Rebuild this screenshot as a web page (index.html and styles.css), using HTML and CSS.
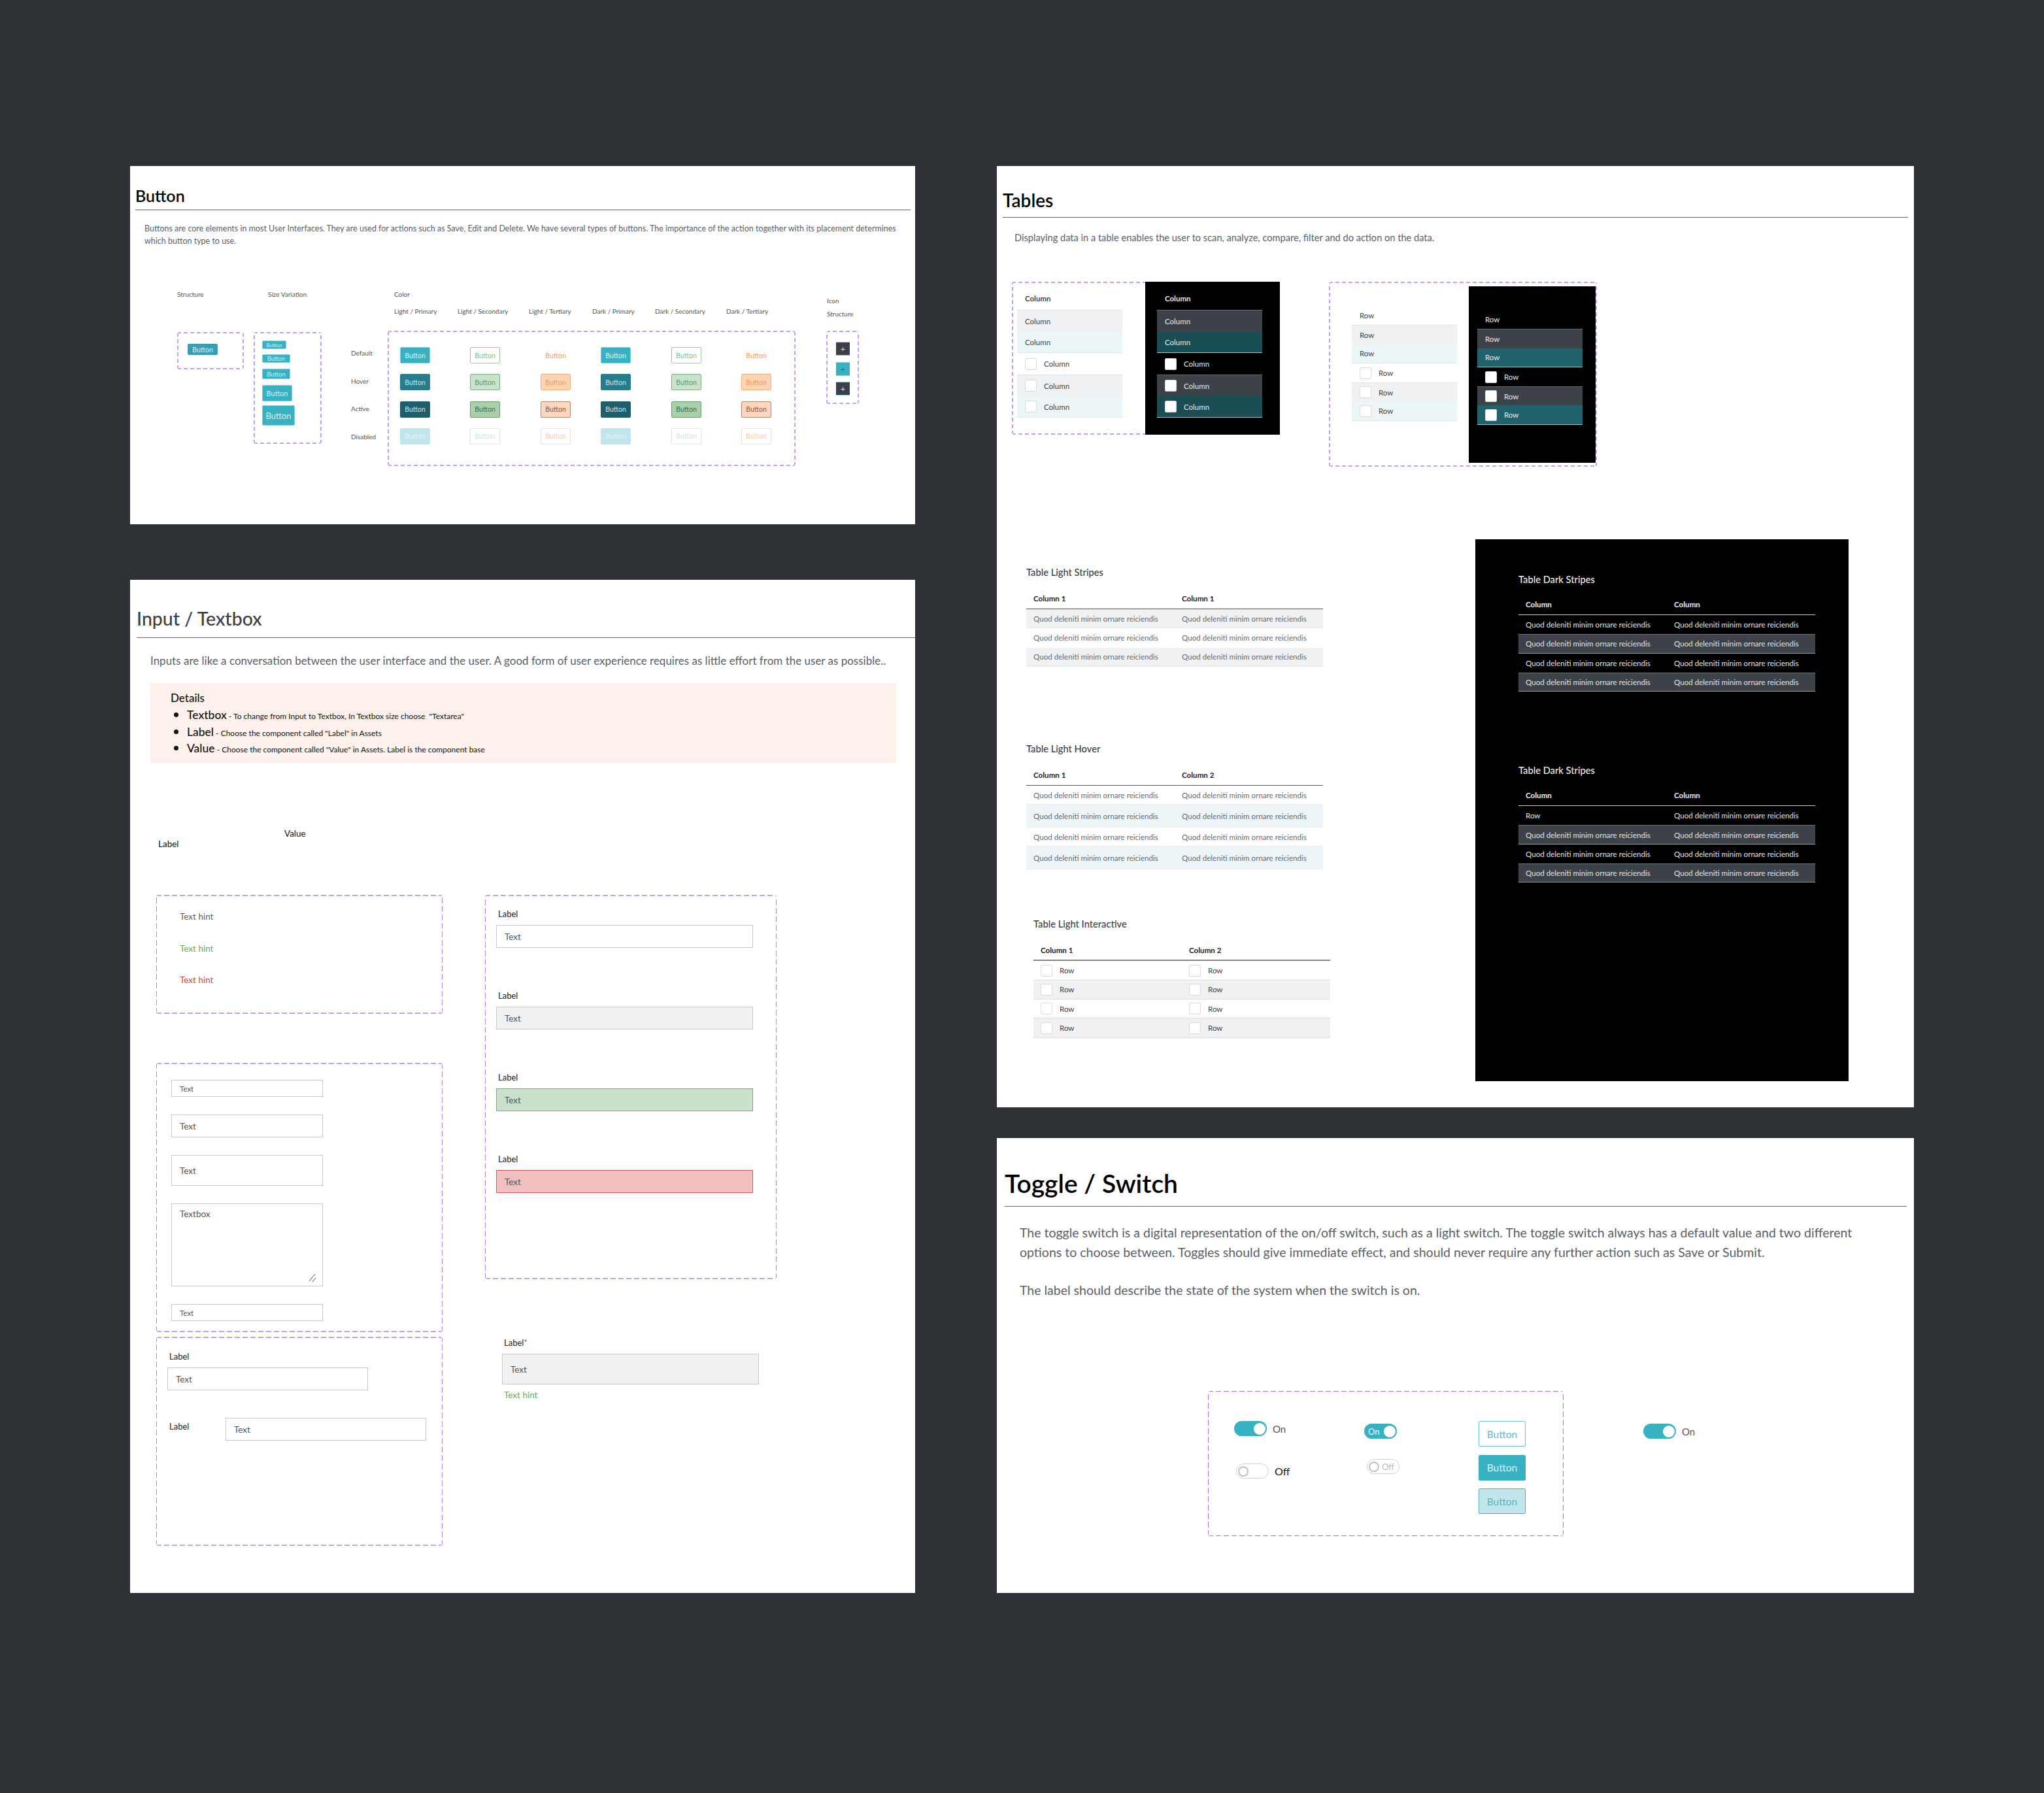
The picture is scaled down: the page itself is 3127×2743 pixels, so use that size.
FILE: index.html
```html
<!DOCTYPE html>
<html lang="en">
<head>
    <meta charset="UTF-8">
    <title>Design System Components</title>
    <link rel="stylesheet" href="styles.css">
</head>
<body>
<div class="canvas">

    <!-- left column -->
    <div class="board-col board-col-left">

        <section class="board board-button">
            <header class="board-head head-button"><h1>Button</h1></header>
            <p class="button-intro">Buttons are core elements in most User Interfaces. They are used for actions such as Save, Edit and Delete. We have several types of buttons. The importance of the action together with its placement determines which button type to use.</p>

            <div class="button-demo">
                <div class="demo-col">
                    <div class="demo-head small">Structure</div>
                    <div class="dashed struct-box"><span class="btn btn-struct">Button</span></div>
                </div>
                <div class="demo-col">
                    <div class="demo-head small indent">Size Variation</div>
                    <div class="dashed size-box">
                        <span class="btn btn-primary btn-xs">Button</span>
                        <span class="btn btn-primary btn-sm">Button</span>
                        <span class="btn btn-primary btn-md">Button</span>
                        <span class="btn btn-primary btn-lg">Button</span>
                        <span class="btn btn-primary btn-xl">Button</span>
                    </div>
                </div>
                <div class="state-col small">
                    <span>Default</span>
                    <span>Hover</span>
                    <span>Active</span>
                    <span>Disabled</span>
                </div>
                <div class="demo-col">
                    <div class="color-head small">
                        <div>Color</div>
                        <div class="color-labels">
                            <span>Light / Primary</span>
                            <span>Light / Secondary</span>
                            <span>Light / Tertiary</span>
                            <span>Dark / Primary</span>
                            <span>Dark / Secondary</span>
                            <span>Dark / Tertiary</span>
                        </div>
                    </div>
                    <div class="dashed color-box">
                        <span class="btn btn-primary">Button</span>
                        <span class="btn btn-second">Button</span>
                        <span class="btn btn-third">Button</span>
                        <span class="btn btn-primary">Button</span>
                        <span class="btn btn-second">Button</span>
                        <span class="btn btn-third">Button</span>

                        <span class="btn btn-primary hover">Button</span>
                        <span class="btn btn-second hover">Button</span>
                        <span class="btn btn-third hover">Button</span>
                        <span class="btn btn-primary hover">Button</span>
                        <span class="btn btn-second hover">Button</span>
                        <span class="btn btn-third hover">Button</span>

                        <span class="btn btn-primary active">Button</span>
                        <span class="btn btn-second active">Button</span>
                        <span class="btn btn-third active">Button</span>
                        <span class="btn btn-primary active">Button</span>
                        <span class="btn btn-second active">Button</span>
                        <span class="btn btn-third active">Button</span>

                        <span class="btn btn-primary disabled">Button</span>
                        <span class="btn btn-second disabled">Button</span>
                        <span class="btn btn-third disabled">Button</span>
                        <span class="btn btn-primary disabled">Button</span>
                        <span class="btn btn-second disabled">Button</span>
                        <span class="btn btn-third disabled">Button</span>
                    </div>
                </div>
                <div class="demo-col icon-col">
                    <div class="icon-head small"><div>Icon</div><div>Structure</div></div>
                    <div class="dashed icon-box">
                        <span class="icon-btn">+</span>
                        <span class="icon-btn icon-btn-teal">+</span>
                        <span class="icon-btn">+</span>
                    </div>
                </div>
            </div>
        </section>

        <section class="board board-input">
            <header class="board-head head-input"><h1>Input / Textbox</h1></header>
            <p class="input-intro">Inputs are like a conversation between the user interface and the user. A good form of user experience requires as little effort from the user as possible..</p>

            <div class="details">
                <h3>Details</h3>
                <ul>
                    <li><strong>Textbox</strong> - To change from Input to Textbox, In Textbox size choose &nbsp;"Textarea"</li>
                    <li><strong>Label</strong> - Choose the component called "Label" in Assets</li>
                    <li><strong>Value</strong> - Choose the component called "Value" in Assets. Label is the component base</li>
                </ul>
            </div>

            <div class="label-value">
                <span class="lv-label">Label</span>
                <span>Value</span>
            </div>

            <div class="input-cols">
                <div class="input-col-a">
                    <div class="dashed-thin hint-box">
                        <span class="hint">Text hint</span>
                        <span class="hint hint-ok">Text hint</span>
                        <span class="hint hint-bad">Text hint</span>
                    </div>
                    <div class="dashed-thin size-fields">
                        <div class="field field-s">Text</div>
                        <div class="field field-m">Text</div>
                        <div class="field field-l">Text</div>
                        <div class="field field-area">Textbox
                            <svg class="grip" width="12" height="14" viewBox="0 0 12 14"><path d="M1 12 L10 1 M6 13 L11 7" stroke="#555" stroke-width="1" fill="none"/></svg>
                        </div>
                        <div class="field field-s">Text</div>
                    </div>
                    <div class="dashed-thin layout-box">
                        <div class="form-label">Label</div>
                        <div class="field field-m field-wide">Text</div>
                        <div class="inline-form">
                            <div class="form-label inline-label">Label</div>
                            <div class="field field-m field-wide">Text</div>
                        </div>
                    </div>
                </div>

                <div class="input-col-b">
                    <div class="dashed-thin state-box">
                        <div class="form-label">Label</div>
                        <div class="field field-m field-full">Text</div>
                        <div class="form-label">Label</div>
                        <div class="field field-m field-full field-off">Text</div>
                        <div class="form-label">Label</div>
                        <div class="field field-m field-full field-ok">Text</div>
                        <div class="form-label">Label</div>
                        <div class="field field-m field-full field-bad">Text</div>
                    </div>
                    <div class="required">
                        <div class="form-label">Label<span class="star">*</span></div>
                        <div class="field field-l field-full field-off">Text</div>
                        <span class="hint hint-ok">Text hint</span>
                    </div>
                </div>
            </div>
        </section>
    </div>

    <!-- right column -->
    <div class="board-col board-col-right">

        <section class="board board-tables">
            <header class="board-head head-tables"><h1>Tables</h1></header>
            <p class="tables-intro">Displaying data in a table enables the user to scan, analyze, compare, filter and do action on the data.</p>

            <div class="cell-demos">
                <div class="dashed cell-box cell-box-col">
                    <div class="cells cells-light">
                        <div class="cell cell-head">Column</div>
                        <div class="cell cell-gray">Column</div>
                        <div class="cell cell-blue">Column</div>
                        <div class="cell"><i class="check"></i>Column</div>
                        <div class="cell cell-gray"><i class="check"></i>Column</div>
                        <div class="cell cell-blue"><i class="check"></i>Column</div>
                    </div>
                    <div class="cells cells-dark">
                        <div class="cell cell-head">Column</div>
                        <div class="cell cell-gray">Column</div>
                        <div class="cell cell-blue">Column</div>
                        <div class="cell"><i class="check"></i>Column</div>
                        <div class="cell cell-gray"><i class="check"></i>Column</div>
                        <div class="cell cell-blue"><i class="check"></i>Column</div>
                    </div>
                </div>
                <div class="dashed cell-box cell-box-row">
                    <div class="cells cells-light">
                        <div class="cell">Row</div>
                        <div class="cell cell-gray">Row</div>
                        <div class="cell cell-blue">Row</div>
                        <div class="cell"><i class="check"></i>Row</div>
                        <div class="cell cell-gray"><i class="check"></i>Row</div>
                        <div class="cell cell-blue"><i class="check"></i>Row</div>
                    </div>
                    <div class="cells cells-dark">
                        <div class="cell">Row</div>
                        <div class="cell cell-gray">Row</div>
                        <div class="cell cell-blue">Row</div>
                        <div class="cell"><i class="check"></i>Row</div>
                        <div class="cell cell-gray"><i class="check"></i>Row</div>
                        <div class="cell cell-blue"><i class="check"></i>Row</div>
                    </div>
                </div>
            </div>

            <div class="table-demos">
                <div class="light-tables">
                    <h4>Table Light Stripes</h4>
                    <div class="data-table stripes">
                        <div class="row row-head"><span>Column 1</span><span>Column 1</span></div>
                        <div class="row"><span>Quod deleniti minim ornare reiciendis</span><span>Quod deleniti minim ornare reiciendis</span></div>
                        <div class="row"><span>Quod deleniti minim ornare reiciendis</span><span>Quod deleniti minim ornare reiciendis</span></div>
                        <div class="row"><span>Quod deleniti minim ornare reiciendis</span><span>Quod deleniti minim ornare reiciendis</span></div>
                    </div>

                    <h4 class="hover-title">Table Light Hover</h4>
                    <div class="data-table hover-rows">
                        <div class="row row-head"><span>Column 1</span><span>Column 2</span></div>
                        <div class="row"><span>Quod deleniti minim ornare reiciendis</span><span>Quod deleniti minim ornare reiciendis</span></div>
                        <div class="row"><span>Quod deleniti minim ornare reiciendis</span><span>Quod deleniti minim ornare reiciendis</span></div>
                        <div class="row"><span>Quod deleniti minim ornare reiciendis</span><span>Quod deleniti minim ornare reiciendis</span></div>
                        <div class="row"><span>Quod deleniti minim ornare reiciendis</span><span>Quod deleniti minim ornare reiciendis</span></div>
                    </div>

                    <div class="interactive">
                        <h4>Table Light Interactive</h4>
                        <div class="data-table interactive-rows">
                            <div class="row row-head"><span>Column 1</span><span>Column 2</span></div>
                            <div class="row"><span><i class="check"></i>Row</span><span><i class="check"></i>Row</span></div>
                            <div class="row"><span><i class="check"></i>Row</span><span><i class="check"></i>Row</span></div>
                            <div class="row"><span><i class="check"></i>Row</span><span><i class="check"></i>Row</span></div>
                            <div class="row"><span><i class="check"></i>Row</span><span><i class="check"></i>Row</span></div>
                        </div>
                    </div>
                </div>

                <div class="dark-tables">
                    <h4>Table Dark Stripes</h4>
                    <div class="data-table dark-rows">
                        <div class="row row-head"><span>Column</span><span>Column</span></div>
                        <div class="row"><span>Quod deleniti minim ornare reiciendis</span><span>Quod deleniti minim ornare reiciendis</span></div>
                        <div class="row"><span>Quod deleniti minim ornare reiciendis</span><span>Quod deleniti minim ornare reiciendis</span></div>
                        <div class="row"><span>Quod deleniti minim ornare reiciendis</span><span>Quod deleniti minim ornare reiciendis</span></div>
                        <div class="row"><span>Quod deleniti minim ornare reiciendis</span><span>Quod deleniti minim ornare reiciendis</span></div>
                    </div>

                    <h4 class="dark-second">Table Dark Stripes</h4>
                    <div class="data-table dark-rows">
                        <div class="row row-head"><span>Column</span><span>Column</span></div>
                        <div class="row"><span>Row</span><span>Quod deleniti minim ornare reiciendis</span></div>
                        <div class="row"><span>Quod deleniti minim ornare reiciendis</span><span>Quod deleniti minim ornare reiciendis</span></div>
                        <div class="row"><span>Quod deleniti minim ornare reiciendis</span><span>Quod deleniti minim ornare reiciendis</span></div>
                        <div class="row"><span>Quod deleniti minim ornare reiciendis</span><span>Quod deleniti minim ornare reiciendis</span></div>
                    </div>
                </div>
            </div>
        </section>

        <section class="board board-toggle">
            <header class="board-head head-toggle"><h1>Toggle / Switch</h1></header>
            <div class="toggle-intro">
                <p>The toggle switch is a digital representation of the on/off switch, such as a light switch. The toggle switch always has a default value and two different options to choose between. Toggles should give immediate effect, and should never require any further action such as Save or Submit.</p>
                <p>The label should describe the state of the system when the switch is on.</p>
            </div>

            <div class="toggle-demo">
                <div class="dashed-thin toggle-box">
                    <div class="toggle-col-a">
                        <div class="toggle-line"><span class="toggle on"><i></i></span><span class="toggle-text">On</span></div>
                        <div class="toggle-line line-off"><span class="toggle off"><i></i></span><span class="toggle-text text-off">Off</span></div>
                    </div>
                    <div class="toggle-col-b">
                        <span class="toggle on">On<i></i></span>
                        <span class="toggle off faded"><i></i>Off</span>
                    </div>
                    <div class="toggle-col-c">
                        <span class="tbtn tbtn-outline">Button</span>
                        <span class="tbtn tbtn-solid">Button</span>
                        <span class="tbtn tbtn-soft">Button</span>
                    </div>
                </div>
                <div class="toggle-line toggle-lone"><span class="toggle on"><i></i></span><span class="toggle-text">On</span></div>
            </div>
        </section>
    </div>
</div>
</body>
</html>
```

FILE: styles.css
```css
* {
    box-sizing: border-box;
}

html, body {
    margin: 0;
    padding: 0;
}

body {
    background-color: #2e3136;
    font-family: "Lato", "Liberation Sans", sans-serif;
    color: #3b4048;
}

h1, h3, h4, p, ul {
    margin: 0;
    padding: 0;
}

.canvas {
    display: flex;
    gap: 125px;
    width: 3127px;
    height: 2743px;
    overflow: hidden;
    padding: 254px 0 0 199px;
}

.board-col {
    display: flex;
    flex-direction: column;
}

.board-col-left {
    width: 1201px;
    gap: 85px;
}

.board-col-right {
    width: 1403px;
    gap: 47px;
}

.board {
    background-color: #fff;
}

.board-head {
    border-bottom: 1px solid #666;
}

.board-head h1 {
    font-weight: 600;
    color: #000;
}

/* the dashes in the source are longer than a real dashed border gives */
.dashed, .dashed-thin {
    --dash: #c49bff;
    --dash-v: #c49bff;
    --h: 2px;
    --v: 2px;
    border: 2px solid transparent;
    border-radius: 4px;
    background:
        repeating-linear-gradient(90deg, var(--dash) 0 6px, transparent 6px 10px) top / 100% var(--h) no-repeat,
        repeating-linear-gradient(90deg, var(--dash) 0 6px, transparent 6px 10px) bottom / 100% var(--h) no-repeat,
        repeating-linear-gradient(0deg, var(--dash-v) 0 6px, transparent 6px 10px) left / var(--v) 100% no-repeat,
        repeating-linear-gradient(0deg, var(--dash-v) 0 6px, transparent 6px 10px) right / var(--v) 100% no-repeat;
    background-origin: border-box;
}

.dashed-thin {
    --dash: #c4a0ff;
    --dash-v: #b280ff;
    --v: 1px;
    border-width: 1px;
    background:
        repeating-linear-gradient(90deg, var(--dash) 0 8px, transparent 8px 12px) top / 100% var(--h) no-repeat,
        repeating-linear-gradient(90deg, var(--dash) 0 8px, transparent 8px 12px) bottom / 100% var(--h) no-repeat,
        repeating-linear-gradient(0deg, var(--dash-v) 0 9px, transparent 9px 13px) left / var(--v) 100% no-repeat,
        repeating-linear-gradient(0deg, var(--dash-v) 0 9px, transparent 9px 13px) right / var(--v) 100% no-repeat;
    background-origin: border-box;
}

.small {
    font-size: 10px;
    line-height: 20px;
    color: #555;
}

/* Button board */
.board-button {
    height: 548px;
}

.head-button {
    margin: 0 7px 0 8px;
    padding: 29px 0 5px;
    border-bottom: 2px solid #aaa;
}

.head-button h1 {
    font-size: 25px;
    line-height: 32px;
}

.button-intro {
    margin: 18px 0 0 22px;
    width: 1165px;
    font-size: 12.5px;
    line-height: 19px;
    color: #5a5f66;
}

.button-demo {
    display: flex;
    align-items: flex-start;
    margin: 62px 0 0 72px;
}

.demo-head {
    height: 68px;
}

.demo-head.indent {
    padding-left: 22px;
}

.struct-box {
    width: 102px;
    height: 57px;
    padding: 16px 14px;
}

.size-box {
    display: flex;
    flex-direction: column;
    align-items: flex-start;
    width: 104px;
    height: 171px;
    margin-left: 15px;
    padding: 11px 11px;
}

.demo-col:nth-child(2) .demo-head {
    margin-left: 15px;
}

.btn {
    display: flex;
    align-items: center;
    justify-content: center;
    width: 46px;
    height: 25px;
    border-radius: 2px;
    font-size: 10.5px;
}

.btn-struct {
    height: 17px;
    background-color: #379fb5;
    color: #d7f1f5;
}

.btn-primary {
    background-color: #38b1c3;
    border: 1px solid #7fd0dc;
    color: #d7f1f5;
}

.btn-primary.hover {
    background-color: #287d8c;
    border-color: #287d8c;
    color: #c5e6ec;
}

.btn-primary.active {
    background-color: #1f5f6b;
    border-color: #1f5f6b;
    color: #c5e6ec;
}

.btn-primary.disabled {
    background-color: #bfe6ec;
    border-color: #bfe6ec;
    color: #e4f5f7;
}

.btn-second {
    background-color: #fff;
    border: 1px solid #95cb9a;
    color: #7fc085;
}

.btn-second.hover {
    background-color: #c8e2cc;
    border-color: #7fae85;
    color: #5e9c65;
}

.btn-second.active {
    background-color: #a9d0ab;
    border-color: #6b9a70;
    color: #3e6d44;
}

.btn-second.disabled {
    background-color: #fff;
    border-color: #dcedde;
    color: #d2e8d4;
}

.btn-third {
    background-color: #fff;
    border: 1px solid #fff;
    color: #f0a060;
}

.btn-third.hover {
    background-color: #fdd3b5;
    border-color: #f2b07a;
    color: #ee9a55;
}

.btn-third.active {
    background-color: #fbd6c0;
    border-color: #b08768;
    color: #8a5a38;
}

.btn-third.disabled {
    background-color: #fff;
    border-color: #fbdcc6;
    color: #fbcfae;
}

.btn-xs { width: 37px; height: 13px; font-size: 8px; }
.btn-sm { width: 43px; height: 13px; font-size: 9px; margin-top: 8px; }
.btn-md { width: 43px; height: 16px; font-size: 9.5px; margin-top: 9px; }
.btn-lg { width: 46px; height: 25px; font-size: 11px; margin-top: 9px; }
.btn-xl { width: 50px; height: 31px; font-size: 13px; margin-top: 6px; }

.state-col {
    display: flex;
    flex-direction: column;
    gap: 22.7px;
    width: 56px;
    margin-left: 45px;
    padding-top: 90px;
}

.color-head {
    height: 66px;
    padding-left: 10px;
}

.color-labels {
    display: grid;
    grid-template-columns: 97px 109px 97px 96px 109px 100px;
    margin-top: 6px;
}

.color-box {
    display: grid;
    grid-template-columns: 107px 108px 92px 108px 107px 46px;
    grid-auto-rows: 25px;
    row-gap: 16.3px;
    width: 624px;
    height: 207px;
    padding: 23px 0 0 17px;
}

.icon-col {
    margin-left: 47px;
}

.icon-head {
    height: 66px;
    padding: 10px 0 0 1px;
    line-height: 20px;
}

.icon-box {
    display: flex;
    flex-direction: column;
    gap: 9.5px;
    width: 50px;
    height: 112px;
    padding: 15px 0 0 13px;
}

.icon-btn {
    display: flex;
    align-items: center;
    justify-content: center;
    width: 21px;
    height: 21px;
    background-color: #3b4048;
    border-top: 1px solid #8fc9d2;
    border-bottom: 1px solid #8fc9d2;
    color: #e4e6e8;
    font-size: 12px;
}

.icon-btn-teal {
    background-color: #38b1c3;
    color: #2b6b78;
}

/* Input board */
.board-input {
    height: 1550px;
}

.head-input {
    margin-left: 10px;
    padding: 41px 0 11px;
}

.head-input h1 {
    font-size: 28.5px;
    line-height: 36px;
    font-weight: 500;
    color: #3b4048;
}

.input-intro {
    margin: 23px 0 0 31px;
    font-size: 17px;
    line-height: 24px;
    color: #5a5f66;
}

.details {
    width: 1141px;
    height: 122px;
    margin: 22px 0 0 31px;
    padding: 11px 0 0 31px;
    background-color: #fdf1eb;
    color: #111;
    font-size: 12px;
}

.details h3 {
    font-size: 17px;
    line-height: 24px;
    font-weight: 500;
}

.details ul {
    padding-left: 25px;
}

.details li {
    height: 25.5px;
    line-height: 25.5px;
}

.details li::marker {
    font-size: 20px;
}

.details strong {
    font-size: 17.5px;
    font-weight: 500;
}

.label-value {
    display: flex;
    height: 36px;
    margin: 98px 0 0 43px;
    font-size: 13.5px;
    line-height: 20px;
    color: #111;
}

.lv-label {
    width: 193px;
    margin-top: 16px;
}

.input-cols {
    display: flex;
    gap: 65px;
    margin: 68px 0 0 40px;
}

.input-col-a {
    display: flex;
    flex-direction: column;
    width: 438px;
}

.input-col-b {
    width: 446px;
}

.hint-box {
    display: flex;
    flex-direction: column;
    gap: 28.5px;
    height: 182px;
    padding: 22px 0 0 35px;
}

.hint {
    display: block;
    font-size: 13.5px;
    line-height: 20px;
    color: #5a5f66;
}

.hint-ok {
    color: #5cae63;
}

.hint-bad {
    color: #d9434a;
}

.field {
    display: flex;
    align-items: center;
    width: 232px;
    padding-left: 12px;
    background-color: #fff;
    border: 1px solid #c6c8cb;
    font-size: 13.5px;
    color: #555;
}

.field-s { height: 26px; font-size: 11.5px; }
.field-m { height: 35px; }
.field-l { height: 47px; }

.field-area {
    position: relative;
    align-items: flex-start;
    height: 127px;
    padding-top: 7px;
}

.grip {
    position: absolute;
    right: 9px;
    bottom: 5px;
}

.field-wide {
    width: 307px;
}

.field-full {
    width: 393px;
}

.field-off {
    background-color: #f0f1f3;
}

.field-ok {
    background-color: #c8e2cc;
    border-color: #6fb277;
}

.field-bad {
    background-color: #f0bfc0;
    border-color: #d9535a;
}

.size-fields {
    display: flex;
    flex-direction: column;
    gap: 27px;
    height: 412px;
    margin-top: 75px;
    padding: 25px 0 0 22px;
}

.layout-box {
    height: 320px;
    margin-top: 7px;
    padding: 19px 0 0 16px;
}

.form-label {
    margin: 0 0 7px 3px;
    font-size: 13px;
    line-height: 20px;
    color: #222;
}

.star {
    color: #e0414a;
}

.inline-form {
    display: flex;
    align-items: flex-start;
    margin-top: 42px;
}

.inline-label {
    width: 86px;
    margin: 3px 0 0 3px;
}

.state-box {
    height: 588px;
    padding: 18px 0 0 16px;
}

.state-box .field {
    margin-bottom: 63px;
}

.required {
    margin: 87px 0 0 26px;
}

.required .hint {
    margin: 6px 0 0 3px;
}

/* Tables board */
.board-tables {
    height: 1440px;
}

.head-tables {
    margin: 0 9px;
    padding: 34px 0 8px;
}

.head-tables h1 {
    font-size: 28px;
    line-height: 36px;
}

.tables-intro {
    margin: 21px 0 0 27px;
    font-size: 14.6px;
    line-height: 20px;
    color: #5a5f66;
}

.cell-demos {
    display: flex;
    align-items: flex-start;
    gap: 75px;
    margin: 57px 0 0 23px;
}

.cell-box {
    display: flex;
    align-items: flex-start;
}

.cell-box-col {
    width: 410px;
    height: 234px;
}

.cell-box-row {
    width: 410px;
    height: 283px;
}

.cells {
    display: grid;
    grid-template-columns: 161px;
    font-size: 11.5px;
}

.cell {
    display: flex;
    align-items: center;
    padding-left: 12px;
}

.cell-box-col .cells {
    grid-auto-rows: 33px;
}

.cell-box-col .cell-head {
    height: 30px;
    font-weight: 700;
}

.cell-box-row .cells {
    grid-auto-rows: 29.3px;
}

.cells-light {
    color: #444;
}

.cell-box-col .cells-light {
    width: 202px;
    height: 100%;
    padding: 8px 0 0 6px;
}

/* black half runs over the dashes */
.cell-box-col .cells-dark {
    width: 206px;
    height: 234px;
    margin: -2px -2px 0 0;
    padding: 10px 0 0 18px;
}

.cell-box-row .cells-light {
    width: 212px;
    height: 100%;
    padding: 35px 0 0 33px;
}

.cell-box-row .cells-dark {
    width: 194px;
    height: 270px;
    margin-top: 5px;
    padding: 36px 0 0 13px;
}

.cells-dark {
    background-color: #000;
    color: #e8e9ea;
}

.cells-light .cell-gray {
    background-color: #f0f1f3;
    border-top: 1px solid #e2e3e6;
}

.cells-light .cell-blue {
    background-color: #ecf6f8;
    border-bottom: 1px solid #e2e9eb;
}

.cells-dark .cell-gray {
    background-color: #3d4248;
    border-top: 1px solid #65696e;
}

.cells-dark .cell-blue {
    background-color: #1b4d55;
    border-bottom: 1px solid #9fc0c5;
}

.cell-box-row .cells-dark .cell-blue {
    background-color: #21636c;
}

.check {
    display: inline-block;
    flex: none;
    width: 18px;
    height: 18px;
    margin-right: 11px;
    background-color: #fff;
    border: 1px solid #d8dadd;
    border-radius: 2px;
}

.table-demos {
    display: flex;
    align-items: flex-start;
    margin: 111px 0 0 45px;
}

.light-tables {
    width: 687px;
    padding-top: 40px;
}

.light-tables h4, .dark-tables h4 {
    margin-bottom: 15px;
    font-size: 14.7px;
    line-height: 20px;
    font-weight: 500;
    color: #3b4048;
}

.data-table {
    width: 454px;
    font-size: 11.6px;
    color: #666b72;
}

.row {
    display: grid;
    grid-template-columns: 227px 227px;
    align-items: center;
    height: 29.3px;
    padding-left: 11px;
}

.row-head {
    height: 32px;
    font-weight: 700;
    color: #222;
    border-bottom: 1px solid #555;
}

.stripes .row:nth-child(even) {
    background-color: #f0f1f3;
    border-bottom: 1px solid #e8e9eb;
}

.hover-title {
    margin-top: 115px;
}

.hover-rows .row:not(.row-head) {
    border-bottom: 1px solid #e8ebed;
}

.hover-rows .row:not(.row-head):nth-child(odd) {
    height: 35px;
    background-color: #ecf6f8;
}

.interactive {
    margin: 73px 0 0 11px;
}

.interactive-rows {
    color: #444;
}

.interactive-rows .row span {
    display: flex;
    align-items: center;
}

.interactive-rows .row:not(.row-head) {
    border-bottom: 1px solid #dcdee1;
}

.interactive-rows .row:not(.row-head):nth-child(odd) {
    background-color: #f0f1f3;
}

.interactive-rows .row-head {
    border-bottom: 2px solid #888;
}

.dark-tables {
    width: 571px;
    height: 829px;
    padding: 51px 0 0 66px;
    background-color: #000;
}

.dark-tables h4 {
    margin-bottom: 13px;
    color: #eee;
}

.dark-second {
    margin-top: 110px;
}

.dark-rows {
    color: #e2e4e6;
}

.dark-rows .row-head {
    color: #eee;
    border-bottom: 1px solid #ccc;
}

.dark-rows .row:not(.row-head):nth-child(odd) {
    background-color: #3d4248;
    border-top: 1px solid #70747a;
    border-bottom: 1px solid #999;
}

/* Toggle board */
.board-toggle {
    height: 696px;
}

.head-toggle {
    margin: 0 11px 0 12px;
    padding: 45px 0 11px;
}

.head-toggle h1 {
    font-size: 39px;
    line-height: 48px;
}

.toggle-intro {
    width: 1300px;
    margin: 25px 0 0 35px;
    font-size: 19.5px;
    line-height: 30px;
    color: #5a5f66;
}

.toggle-intro p + p {
    margin-top: 28px;
}

.toggle-demo {
    display: flex;
    align-items: flex-start;
    margin: 139px 0 0 323px;
}

.toggle-box {
    --dash: #a970ff;
    --dash-v: #a970ff;
    --h: 1px;
    display: flex;
    align-items: flex-start;
    width: 544px;
    height: 222px;
    padding-left: 39px;
}

.toggle-col-a {
    width: 199px;
    margin-top: 45px;
}

.toggle-col-b {
    display: flex;
    flex-direction: column;
    gap: 31px;
    width: 175px;
    margin-top: 49px;
}

.toggle-col-c {
    display: flex;
    flex-direction: column;
    gap: 12.5px;
    margin-top: 45px;
}

.toggle-line {
    display: flex;
    align-items: center;
    gap: 9px;
}

.line-off {
    margin: 42px 0 0 3px;
}

.toggle {
    display: flex;
    align-items: center;
    width: 50px;
    height: 23px;
    padding: 0 2px;
    border-radius: 12px;
    font-size: 13px;
}

.toggle i {
    display: block;
    flex: none;
}

.toggle.on {
    justify-content: space-between;
    padding-left: 6px;
    background-color: #38b1c3;
    color: #e6f6f8;
}

.toggle.on i {
    width: 18px;
    height: 18px;
    margin-left: auto;
    background-color: #fff;
    border-radius: 50%;
}

.toggle.off {
    gap: 4px;
    background-color: #fff;
    border: 1px solid #cfd1d4;
    color: #bbb;
}

.toggle.off i {
    width: 16px;
    height: 16px;
    background-color: #fff;
    border: 2px solid #bfc1c4;
    border-radius: 50%;
}

.faded {
    margin-left: 4px;
}

.toggle-text {
    font-size: 15px;
    color: #555;
}

.text-off {
    font-size: 16px;
    color: #111;
}

.tbtn {
    display: flex;
    align-items: center;
    justify-content: center;
    width: 72px;
    height: 39px;
    border-radius: 2px;
    font-size: 15.5px;
}

.tbtn-outline {
    background-color: #fff;
    border: 1px solid #6ac5d3;
    color: #5cbccb;
}

.tbtn-solid {
    background-color: #38b1c3;
    color: #d7f1f5;
}

.tbtn-soft {
    background-color: #c1e7ed;
    border: 1px solid #58aebd;
    color: #5ab2c2;
}

.toggle-lone {
    margin: 50px 0 0 122px;
}
```
